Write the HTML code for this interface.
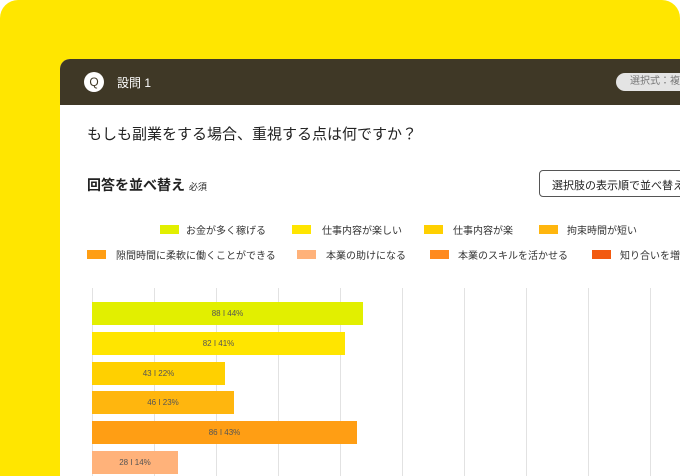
<!DOCTYPE html>
<html style="width:680px;height:476px;overflow:hidden"><head><meta charset="utf-8"><style>
*{margin:0;padding:0;box-sizing:border-box}
body{width:680px;height:476px;background:#fff;overflow:hidden;font-family:"Liberation Sans","Noto Sans CJK JP",sans-serif;position:relative}
.bg{position:absolute;left:0;top:0;width:680px;height:476px;background:#FFE600;border-radius:18px 18px 0 0}
.card{position:absolute;left:60px;top:59px;width:620px;height:417px;background:#fff;border-radius:10px 0 0 0;overflow:hidden}
.hd{height:46px;background:#3F3826;position:relative;color:#fff}
.q{position:absolute;left:24px;top:13px;width:20px;height:20px;border-radius:50%;background:#fff;color:#3F3826;font-size:12px;text-align:center;line-height:20px}
.t{position:absolute;left:57px;top:15px;font-size:12px}
.pill{position:absolute;left:556px;top:14px;width:90px;height:18px;border-radius:9px;background:#e4e4e4;color:#777;font-size:10px;line-height:18px;padding-left:14px;white-space:nowrap}
.abs{position:absolute;white-space:nowrap}
.sw{position:absolute;width:19px;height:9px}
.lt{position:absolute;font-size:10px;color:#333;white-space:nowrap}
.gl{position:absolute;top:229px;width:1px;height:210px;background:#e2e2e2}
.bar{position:absolute;left:32px;height:23px;font-size:8px;color:#555;text-align:center;line-height:23px}
</style></head><body>
<div class="bg"></div>
<div class="card">
<div class="hd"><div class="q">Q</div><div class="t">設問 1</div><div class="pill">選択式：複数</div></div>
<div class="abs" style="left:27px;top:64px;font-size:15px;color:#222">もしも副業をする場合、重視する点は何ですか？</div>
<div class="abs" style="left:27px;top:116px;font-size:14px;font-weight:bold;color:#222">回答を並べ替え <span style="font-size:9px;font-weight:normal">必須</span></div>
<div class="abs" style="left:479px;top:111px;width:200px;height:27px;border:1px solid #555;border-radius:4px;font-size:11px;color:#222;padding:6px 0 0 12px">選択肢の表示順で並べ替え</div>

<div class="sw" style="left:100px;top:166px;background:#E2EF00"></div><div class="lt" style="left:126px;top:163px">お金が多く稼げる</div>
<div class="sw" style="left:232px;top:166px;background:#FFE500"></div><div class="lt" style="left:262px;top:163px">仕事内容が楽しい</div>
<div class="sw" style="left:364px;top:166px;background:#FFD000"></div><div class="lt" style="left:393px;top:163px">仕事内容が楽</div>
<div class="sw" style="left:479px;top:166px;background:#FFB60E"></div><div class="lt" style="left:507px;top:163px">拘束時間が短い</div>
<div class="sw" style="left:27px;top:191px;background:#FF9E14"></div><div class="lt" style="left:56px;top:188px">隙間時間に柔軟に働くことができる</div>
<div class="sw" style="left:237px;top:191px;background:#FFB27A"></div><div class="lt" style="left:266px;top:188px">本業の助けになる</div>
<div class="sw" style="left:370px;top:191px;background:#FF8A1E"></div><div class="lt" style="left:398px;top:188px">本業のスキルを活かせる</div>
<div class="sw" style="left:532px;top:191px;background:#F25A10"></div><div class="lt" style="left:560px;top:188px">知り合いを増やせる</div>

<div class="gl" style="left:32px"></div><div class="gl" style="left:94px"></div><div class="gl" style="left:156px"></div><div class="gl" style="left:218px"></div><div class="gl" style="left:280px"></div><div class="gl" style="left:342px"></div><div class="gl" style="left:404px"></div><div class="gl" style="left:466px"></div><div class="gl" style="left:528px"></div><div class="gl" style="left:590px"></div>

<div class="bar" style="top:243px;width:271px;background:#E2EF00">88 I 44%</div>
<div class="bar" style="top:273px;width:253px;background:#FFE500">82 I 41%</div>
<div class="bar" style="top:303px;width:133px;background:#FFD000">43 I 22%</div>
<div class="bar" style="top:332px;width:142px;background:#FFB60E">46 I 23%</div>
<div class="bar" style="top:362px;width:265px;background:#FF9E14">86 I 43%</div>
<div class="bar" style="top:392px;width:86px;background:#FFB27A">28 I 14%</div>
</div>
</body></html>
